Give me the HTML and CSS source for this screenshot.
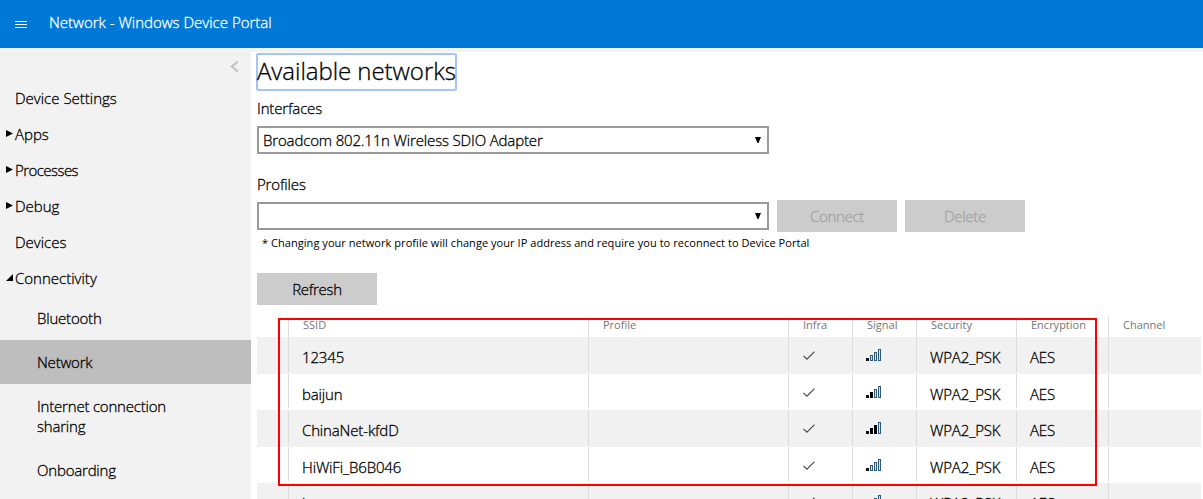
FILE: index.html
```html
<!DOCTYPE html>
<html lang="en">
<head>
<meta charset="utf-8">
<title>Network - Windows Device Portal</title>
<link rel="stylesheet" href="styles.css">
</head>
<body>
<svg class="defs" width="0" height="0" aria-hidden="true">
  <symbol id="check" viewBox="0 0 12 9"><path d="M.5 4.8 3.9 8.2 11.5.6" fill="none" stroke="#444" stroke-width="1.1"/></symbol>
  <symbol id="bars" viewBox="0 0 15 12" shape-rendering="crispEdges">
    <path d="M0 9h3v3H0z" fill="#111"/>
    <path d="M4 6h3v6H4zM8 3h3v9H8zM12 0h3v12h-3z" fill="#2d5a7c"/>
    <path d="M5 7h1v4H5zM9 4h1v7H9zM13 1h1v10h-1z" fill="#c4e6fb"/>
  </symbol>
</svg>
<header class="topbar">
  <svg class="burger" width="12" height="8" viewBox="0 0 12 8" shape-rendering="crispEdges"><path d="M0 .5h12M0 3.500h12M0 6.500h12" stroke="#fff"/></svg>
  <span class="app-title">Network - Windows Device Portal</span>
</header>
<div class="layout">
  <nav class="sidebar">
    <div class="collapse"><svg width="9" height="11" viewBox="0 0 9 11"><path d="M7.800.6 1.800 5.500l6 4.900" fill="none" stroke="#c4c4c4" stroke-width="2.200"/></svg></div>
    <a class="item">Device Settings</a>
    <a class="item"><svg class="arrow" width="7" height="7"><path d="M0 0 7 3.500 0 7z"/></svg>Apps</a>
    <a class="item tight"><svg class="arrow" width="7" height="7"><path d="M0 0 7 3.500 0 7z"/></svg>Processes</a>
    <a class="item"><svg class="arrow" width="7" height="7"><path d="M0 0 7 3.500 0 7z"/></svg>Debug</a>
    <a class="item">Devices</a>
    <a class="item"><svg class="arrow" width="7" height="7"><path d="M7 0V7H0z"/></svg>Connectivity</a>
    <div class="children">
      <a class="sub">Bluetooth</a>
      <a class="sub active">Network</a>
      <a class="sub">Internet connection<br>sharing</a>
      <a class="sub">Onboarding</a>
    </div>
  </nav>
  <main class="content">
    <h1 class="heading">Available networks</h1>
    <div class="label">Interfaces</div>
    <div class="select"><span>Broadcom 802.11n Wireless SDIO Adapter</span><svg width="6" height="7"><path d="M0 0h6L3.500 6h-1z"/></svg></div>
    <div class="label second">Profiles</div>
    <div class="profile-row">
      <div class="select"><span></span><svg width="6" height="7"><path d="M0 0h6L3.500 6h-1z"/></svg></div>
      <div class="button disabled">Connect</div>
      <div class="button disabled">Delete</div>
    </div>
    <div class="note">* Changing your network profile will change your IP address and require you to reconnect to Device Portal</div>
    <div class="button refresh">Refresh</div>
    <div class="table">
      <div class="row head"><i></i><b>SSID</b><b>Profile</b><b>Infra</b><b>Signal</b><b>Security</b><b>Encryption</b><b>Channel</b></div>
      <div class="row"><i></i><b>12345</b><b></b><b><svg class="check"><use href="#check"/></svg></b><b><svg class="bars"><use href="#bars"/></svg></b><b>WPA2_PSK</b><b>AES</b><b></b></div>
      <div class="row"><i></i><b>baijun</b><b></b><b><svg class="check"><use href="#check"/></svg></b><b><svg class="bars"><use href="#bars"/><path d="M4 6h3v6H4z"/></svg></b><b>WPA2_PSK</b><b>AES</b><b></b></div>
      <div class="row"><i></i><b>ChinaNet-kfdD</b><b></b><b><svg class="check"><use href="#check"/></svg></b><b><svg class="bars"><use href="#bars"/><path d="M4 6h3v6H4zM8 3h3v9H8z"/></svg></b><b>WPA2_PSK</b><b>AES</b><b></b></div>
      <div class="row"><i></i><b>HiWiFi_B6B046</b><b></b><b><svg class="check"><use href="#check"/></svg></b><b><svg class="bars"><use href="#bars"/></svg></b><b>WPA2_PSK</b><b>AES</b><b></b></div>
      <div class="row"><i></i><b>l</b><b></b><b><svg class="check"><use href="#check"/></svg></b><b><svg class="bars"><use href="#bars"/></svg></b><b>WPA2_PSK</b><b>AES</b><b></b></div>
      <div class="highlight"></div>
    </div>
  </main>
</div>
</body>
</html>
```
FILE: styles.css
```css
* { box-sizing: border-box; }
body {
  margin: 0;
  height: 499px;
  overflow: hidden;
  background: #f2f2f2;
  color: #000;
  font: 300 15px/20px "Open Sans", "Noto Sans", sans-serif;
  -webkit-text-stroke: .3px;
}
svg { display: block; flex: none; }
.defs { position: absolute; }
.topbar {
  display: flex;
  height: 48px;
  padding-left: 15px;
  background: #0078d7;
  color: #fff;
}
.burger { margin-top: 21px; }
.app-title { margin: 12px 0 0 22px; white-space: nowrap; }
.layout { display: flex; height: 451px; }
.sidebar { width: 251px; flex: none; }
.collapse { display: flex; justify-content: flex-end; height: 33px; padding: 13px 12px 0 0; }
.item { display: flex; position: relative; height: 36px; padding: 7px 0 0 15px; }
.tight { letter-spacing: -.55px; }
.arrow { position: absolute; left: 6px; top: 13px; }
.children { margin-top: -1px; }
.sub { display: block; padding: 12px 0 12px 37px; letter-spacing: -.2px; }
.active { background: #bebebe; }
.content {
  flex: 1;
  margin-top: 4px;
  padding: 2px 0 0 6px;
  background: #fff;
}
.heading {
  width: 201px;
  height: 38px;
  margin: -1px 0 0 -1px;
  border: 2px solid #a5c5fa;
  border-radius: 2px;
  font-size: 24px;
  font-weight: 300;
  line-height: 32px;
  letter-spacing: -.05px;
  text-indent: -1px;
  white-space: nowrap;
}
.label { margin-top: 7px; letter-spacing: -.15px; }
.second { margin-top: 20px; }
.select {
  display: flex;
  justify-content: space-between;
  width: 512px;
  height: 28px;
  margin-top: 8px;
  padding: 2px 6px 0 4px;
  border: 2px solid #999;
  letter-spacing: -.15px;
}
.select svg { margin-top: 7px; }
.profile-row { display: flex; gap: 8px; padding-top: 6px; }
.profile-row .select { margin-top: 2px; }
.button { width: 120px; height: 32px; padding-top: 6px; background: #ccc; text-align: center; letter-spacing: -.3px; }
.disabled { color: #a3a3a3; }
.note { margin-top: 1px; padding-left: 5px; font-size: 11px; font-weight: 400; letter-spacing: .05px; white-space: nowrap; -webkit-text-stroke: 0; }
.refresh { margin-top: 20px; }
.table { position: relative; width: 944px; margin-top: 12px; }
.row {
  display: grid;
  grid-template-columns: 31px 300px 200px 64px 64px 100px 92px 1fr;
  height: 36.5px;
  padding-bottom: 2px;
}
.row:nth-child(even) { background: #f1f1f1; }
.row b { padding: 10px 0 0 13px; border-left: 1px solid #dcdcdc; font-weight: inherit; letter-spacing: -.15px; }
.row.head { height: 20px; padding: 0; color: #767676; font-size: 11px; font-weight: 400; -webkit-text-stroke: 0; }
.head b { padding: 0 0 0 14px; line-height: 16px; letter-spacing: 0; }
.check { width: 12px; height: 9px; margin: 4px 0 0 1px; }
.bars { width: 15px; height: 12px; margin-top: 2px; }
.highlight { position: absolute; left: 21px; top: 1px; width: 819px; height: 168px; border: 2px solid #f00; }
```
